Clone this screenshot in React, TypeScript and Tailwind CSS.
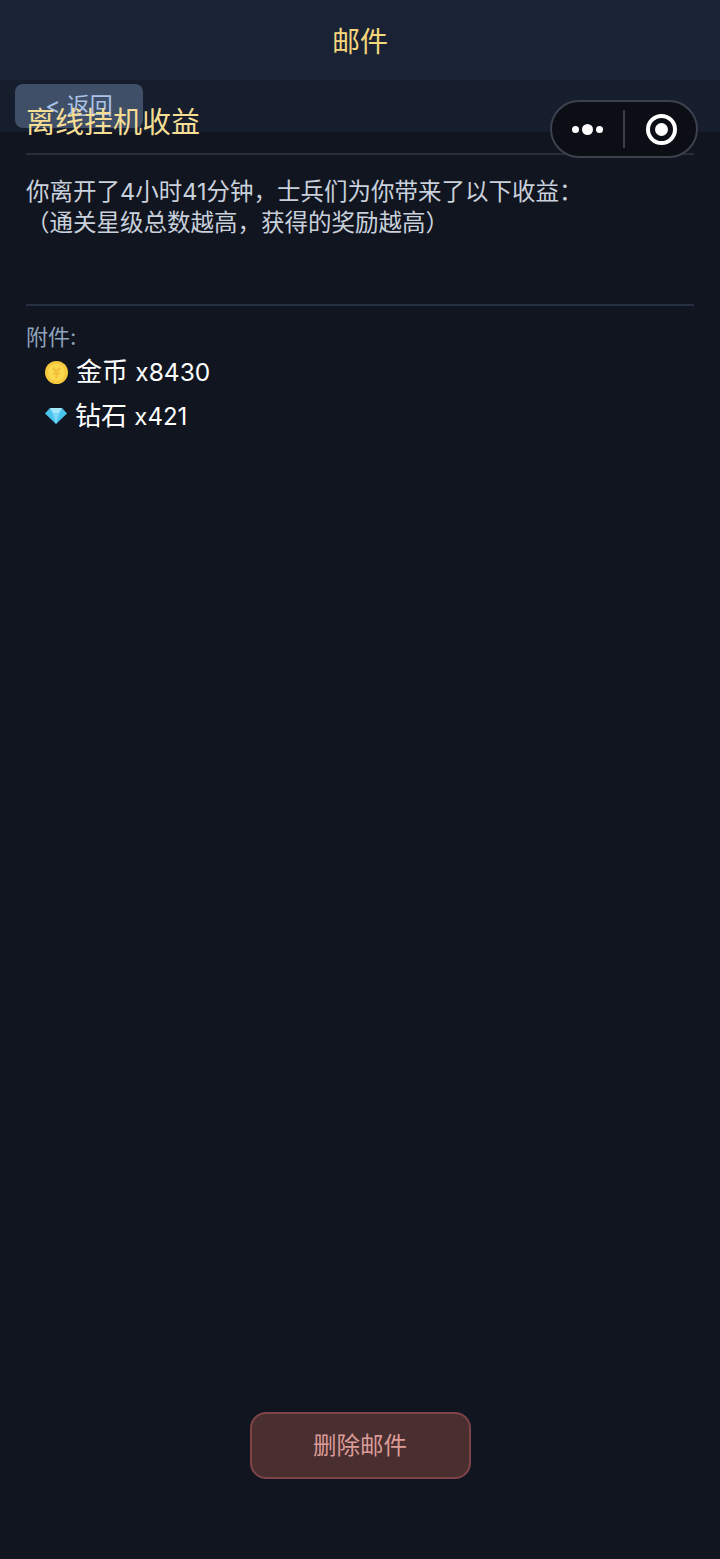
export default function App() {
  return (
    <div className="relative flex h-[1559px] w-[720px] flex-col overflow-hidden bg-[#11151f] font-['Inter','Noto_Sans_CJK_SC',sans-serif]">
      <header className="flex h-[80px] items-center justify-center bg-[#1a2336] pt-[3px] text-[28px] text-[#f5d67b]">邮件</header>
      <div className="h-[52px] bg-[#161d2d] px-[15px] pt-[4px]">
        <div className="flex h-[44px] w-[128px] items-center justify-center rounded-[8px] bg-[#3f4f68] text-[23px] leading-none text-[#a9c2e6]">&lt; 返回</div>
      </div>
      <main className="-mt-[29px] flex flex-1 flex-col px-[26px]">
        <h1 className="relative h-[52px] border-b-2 border-[#262d3b] text-[29px] leading-[40px] text-[#f5dd94]">离线挂机收益</h1>
        <p className="h-[151px] border-b-2 border-[#262f40] pt-[21px] text-[23.5px] leading-[31px] text-[#c9d1dc]">
          你离开了4小时41分钟，士兵们为你带来了以下收益：<br />（通关星级总数越高，获得的奖励越高）
        </p>
        <div className="pt-[17px] text-[22px] leading-[28px] text-[#8fa3bd]">附件:</div>
        <ul className="flex flex-col gap-[10px] pl-[19px] pt-[4px] text-[26px] leading-[34px] text-white">
          <li className="flex items-center gap-[8px]">
            <svg width="23" height="23" viewBox="0 0 22 22">
              <circle cx="11" cy="11" r="11" fill="#f7c93e" />
              <circle cx="11" cy="11" r="8" fill="#fbd94f" />
              <path d="M7.500 6.500 11 10.500 14.500 6.500M11 10.500v6M8 12h6" stroke="#f2bf36" strokeWidth="2" fill="none" />
            </svg>
            <span>金币 <span className="text-[24.5px]">x8430</span></span>
          </li>
          <li className="flex items-center gap-[8px]">
            <svg width="22" height="22" viewBox="0 0 22 22" className="-mt-[4px]">
              <path d="M5 4h12l5 5.500-11 10.500L0 9.500z" fill="#4cc3ef" />
              <path d="M5 4h12l-3 5.500H8z" fill="#a4e6fb" />
              <path d="M8 9.500h6L11 20z" fill="#7dd8f7" />
            </svg>
            <span>钻石 <span className="text-[24px]">x421</span></span>
          </li>
        </ul>
        <div className="mt-auto mb-[80px] flex justify-center">
          <button className="h-[67px] w-[221px] rounded-[16px] border-2 border-[#7e4448] bg-[#4a2f31] text-[23.5px] text-[#dc9c98]">删除邮件</button>
        </div>
      </main>
      <div className="absolute left-[550px] top-[100px] flex h-[58px] w-[148px] items-center rounded-full border-2 border-[#3d414c] bg-[#0c0e15]">
        <div className="flex w-[71px] items-center justify-center gap-[3px]">
          <span className="h-[7px] w-[7px] rounded-full bg-white" />
          <span className="h-[11px] w-[11px] rounded-full bg-white" />
          <span className="h-[7px] w-[7px] rounded-full bg-white" />
        </div>
        <div className="h-[38px] w-[2px] bg-[#3a3e48]" />
        <div className="flex flex-1 items-center justify-center pl-[1px]">
          <div className="flex h-[31px] w-[31px] items-center justify-center rounded-full border-[4px] border-white">
            <span className="h-[13px] w-[13px] rounded-full bg-white" />
          </div>
        </div>
      </div>
    </div>
  );
}
